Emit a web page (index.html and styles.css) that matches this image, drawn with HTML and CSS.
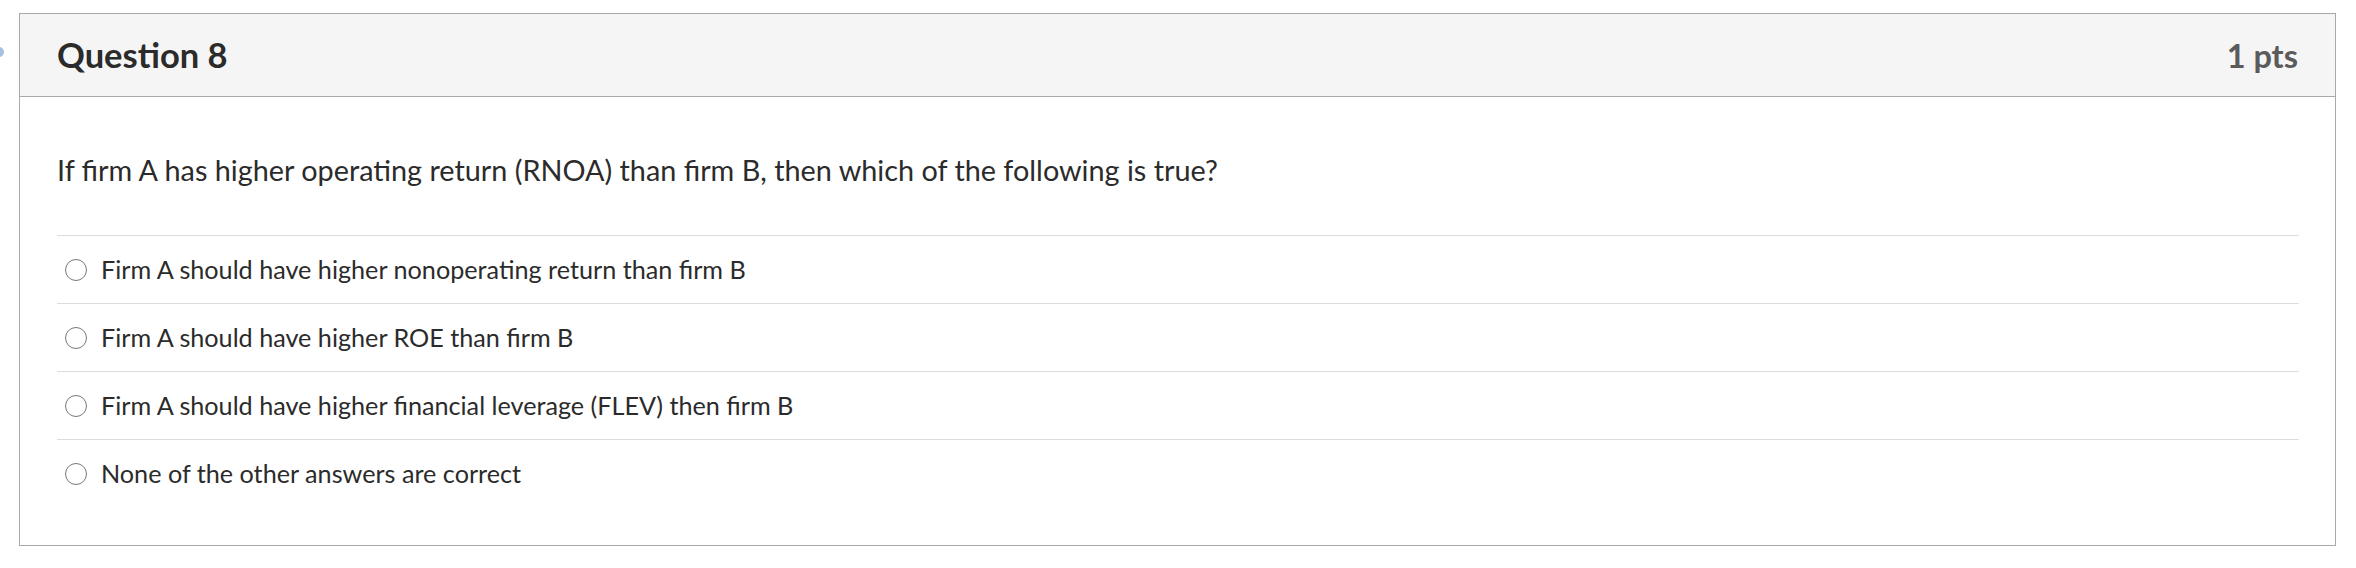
FILE: index.html
```html
<!DOCTYPE html>
<html>
<head>
<meta charset="utf-8">
<link rel="stylesheet" href="styles.css">
</head>
<body>
<div class="page">
  <div class="gutter"><span class="marker"></span></div>
  <div class="question">
    <div class="qheader">
      <h2 class="qtitle">Question 8</h2>
      <span class="qpts">1 pts</span>
    </div>
    <div class="qbody">
      <p class="qtext">If firm A has higher operating return (RNOA) than firm B, then which of the following is true?</p>
      <div class="answers">
        <label class="answer"><span class="radio"></span><span class="atext">Firm A should have higher nonoperating return than firm B</span></label>
        <label class="answer"><span class="radio"></span><span class="atext">Firm A should have higher ROE than firm B</span></label>
        <label class="answer"><span class="radio"></span><span class="atext">Firm A should have higher financial leverage (FLEV) then firm B</span></label>
        <label class="answer"><span class="radio"></span><span class="atext">None of the other answers are correct</span></label>
      </div>
    </div>
  </div>
</div>
</body>
</html>
```
FILE: styles.css
```css
html, body {
  margin: 0;
  padding: 0;
  background: #ffffff;
}
body {
  font-family: Lato, "Noto Sans", "Liberation Sans", sans-serif;
  color: #2d3b45;
}
.page {
  display: flex;
  padding-top: 13px;
  width: 2336px;
}
.gutter {
  width: 19px;
  flex: none;
  padding-top: 34px;
}
.marker {
  display: block;
  width: 10px;
  height: 10px;
  margin-left: -6px;
  border-radius: 50%;
  background: #8fb0d6;
  opacity: 0.8;
}
.question {
  flex: 1;
  border: 1px solid #a9a9a9;
  background: #fff;
}
.qheader {
  display: flex;
  align-items: center;
  justify-content: space-between;
  height: 82px;
  padding: 0 37px 0 37px;
  background: #f5f5f5;
  border-bottom: 1px solid #a9a9a9;
}
.qtitle {
  margin: 0 0 2px 0;
  font-size: 34.5px;
  font-weight: 700;
  color: #2b2b2b;
}
.qpts {
  font-size: 32.5px;
  font-weight: 700;
  color: #5b5b5b;
}
.qbody {
  padding: 53px 36px 38px 37px;
}
.qtext {
  margin: 0 0 45px 0;
  font-size: 28.8px;
  line-height: 40px;
  color: #2b2b2b;
}
.answers {
  display: flex;
  flex-direction: column;
}
.answer {
  display: flex;
  align-items: center;
  height: 67px;
  border-top: 1px solid #dcdcdc;
  font-size: 25.2px;
  color: #2b2b2b;
}
.atext {
  margin-top: -2px;
}
.radio {
  flex: none;
  width: 20px;
  height: 20px;
  margin-left: 8px;
  margin-right: 14px;
  border: 1.5px solid #777;
  border-radius: 50%;
  background: #fff;
}
```
